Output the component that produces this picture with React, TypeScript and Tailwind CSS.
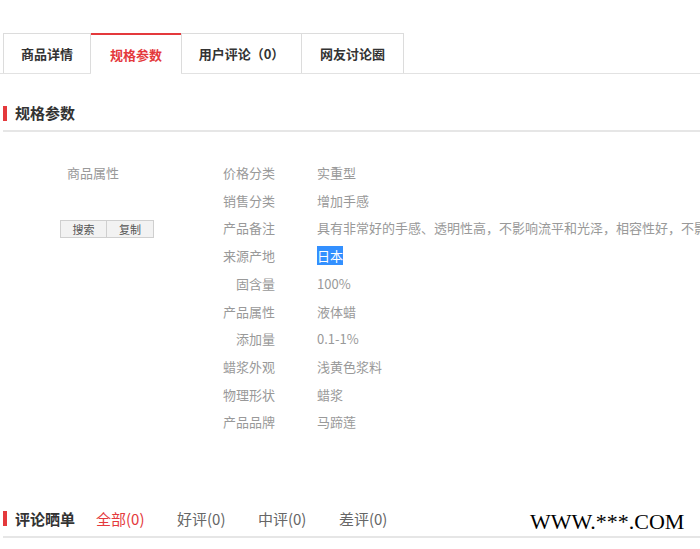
const rows: [string, string][] = [
  ["价格分类", "实重型"],
  ["销售分类", "增加手感"],
  ["产品备注", "具有非常好的手感、透明性高，不影响流平和光泽，相容性好，不影响重涂性能"],
  ["来源产地", "日本"],
  ["固含量", "100%"],
  ["产品属性", "液体蜡"],
  ["添加量", "0.1-1%"],
  ["蜡浆外观", "浅黄色浆料"],
  ["物理形状", "蜡浆"],
  ["产品品牌", "马蹄莲"],
];

const tabs = [
  { label: "商品详情", cls: "w-[88px] border" },
  { label: "规格参数", cls: "w-[90px]", active: true },
  { label: "用户评论（0）", cls: "w-[121px] border" },
  { label: "网友讨论圈", cls: "w-[102px] border border-l-0" },
];

export default function App() {
  return (
    <div
      className="relative w-[700px] h-[549px] overflow-hidden bg-white"
      style={{ fontFamily: '"Noto Sans CJK SC", "Liberation Sans", sans-serif' }}
    >
      {/* tab bar */}
      <div className="mt-[33px] flex border-b border-[#e2e2e2] pl-[3px]">
        {tabs.map((t) =>
          t.active ? (
            <div
              key={t.label}
              className={`${t.cls} -mb-px h-[41px] border-t-2 border-[#e4393c] bg-white flex items-center justify-center text-[13px] font-bold text-[#e4393c]`}
            >
              {t.label}
            </div>
          ) : (
            <div
              key={t.label}
              className={`${t.cls} h-[40px] border-b-0 border-[#dcdcdc] flex items-center justify-center text-[13px] font-bold text-[#333]`}
            >
              {t.label}
            </div>
          )
        )}
      </div>

      {/* section title */}
      <div className="ml-[3px] mt-[30px] flex items-center h-[18px]">
        <span className="w-[4px] h-[15px] bg-[#e4393c]" />
        <span className="ml-[8px] text-[15px] font-bold text-[#333]">规格参数</span>
      </div>
      <div className="ml-[3px] mt-[8px] h-[2px] bg-[#e6e6e6]" />

      {/* specs */}
      <div className="mt-[27px] flex text-[13px]">
        <div className="ml-[60px] w-[94px] flex flex-col">
          <div className="pl-[7px] leading-[28px] text-[#999]">商品属性</div>
          <div className="mt-[33px] flex h-[18px] text-[11px] text-[#555]">
            <button className="w-[47px] h-[18px] border border-[#cfcfcf] bg-[#f2f2f2] leading-[16px]">搜索</button>
            <button className="w-[47px] h-[18px] border border-l-0 border-[#cfcfcf] bg-[#f2f2f2] leading-[16px]">复制</button>
          </div>
        </div>
        <div className="flex flex-col">
          {rows.map(([k, v]) => (
            <div key={k} className="flex h-[27.7px] items-center whitespace-nowrap">
              <span className="w-[121px] text-right text-[#999]">{k}</span>
              <span className="ml-[42px] text-[#999]">
                {k === "来源产地" ? (
                  <span className="bg-[#3390ff] text-white">{v}</span>
                ) : (
                  v
                )}
              </span>
            </div>
          ))}
        </div>
      </div>

      {/* comments header */}
      <div className="ml-[3px] mt-[74px] flex items-center h-[18px]">
        <span className="w-[4px] h-[15px] bg-[#e4393c]" />
        <span className="ml-[8px] text-[15px] font-bold text-[#333]">评论晒单</span>
        <div className="ml-[21px] flex gap-[32.5px] text-[15px] text-[#666]">
          <span className="text-[#e4393c]">全部(0)</span>
          <span>好评(0)</span>
          <span>中评(0)</span>
          <span>差评(0)</span>
        </div>
      </div>
      <div className="ml-[3px] mt-[8px] h-[2px] bg-[#e6e6e6]" />

      {/* watermark */}
      <div
        className="absolute left-[530px] top-[511px] text-[22px] text-black leading-none"
        style={{ fontFamily: '"Liberation Serif", serif' }}
      >
        WWW.***.COM
      </div>
    </div>
  );
}
